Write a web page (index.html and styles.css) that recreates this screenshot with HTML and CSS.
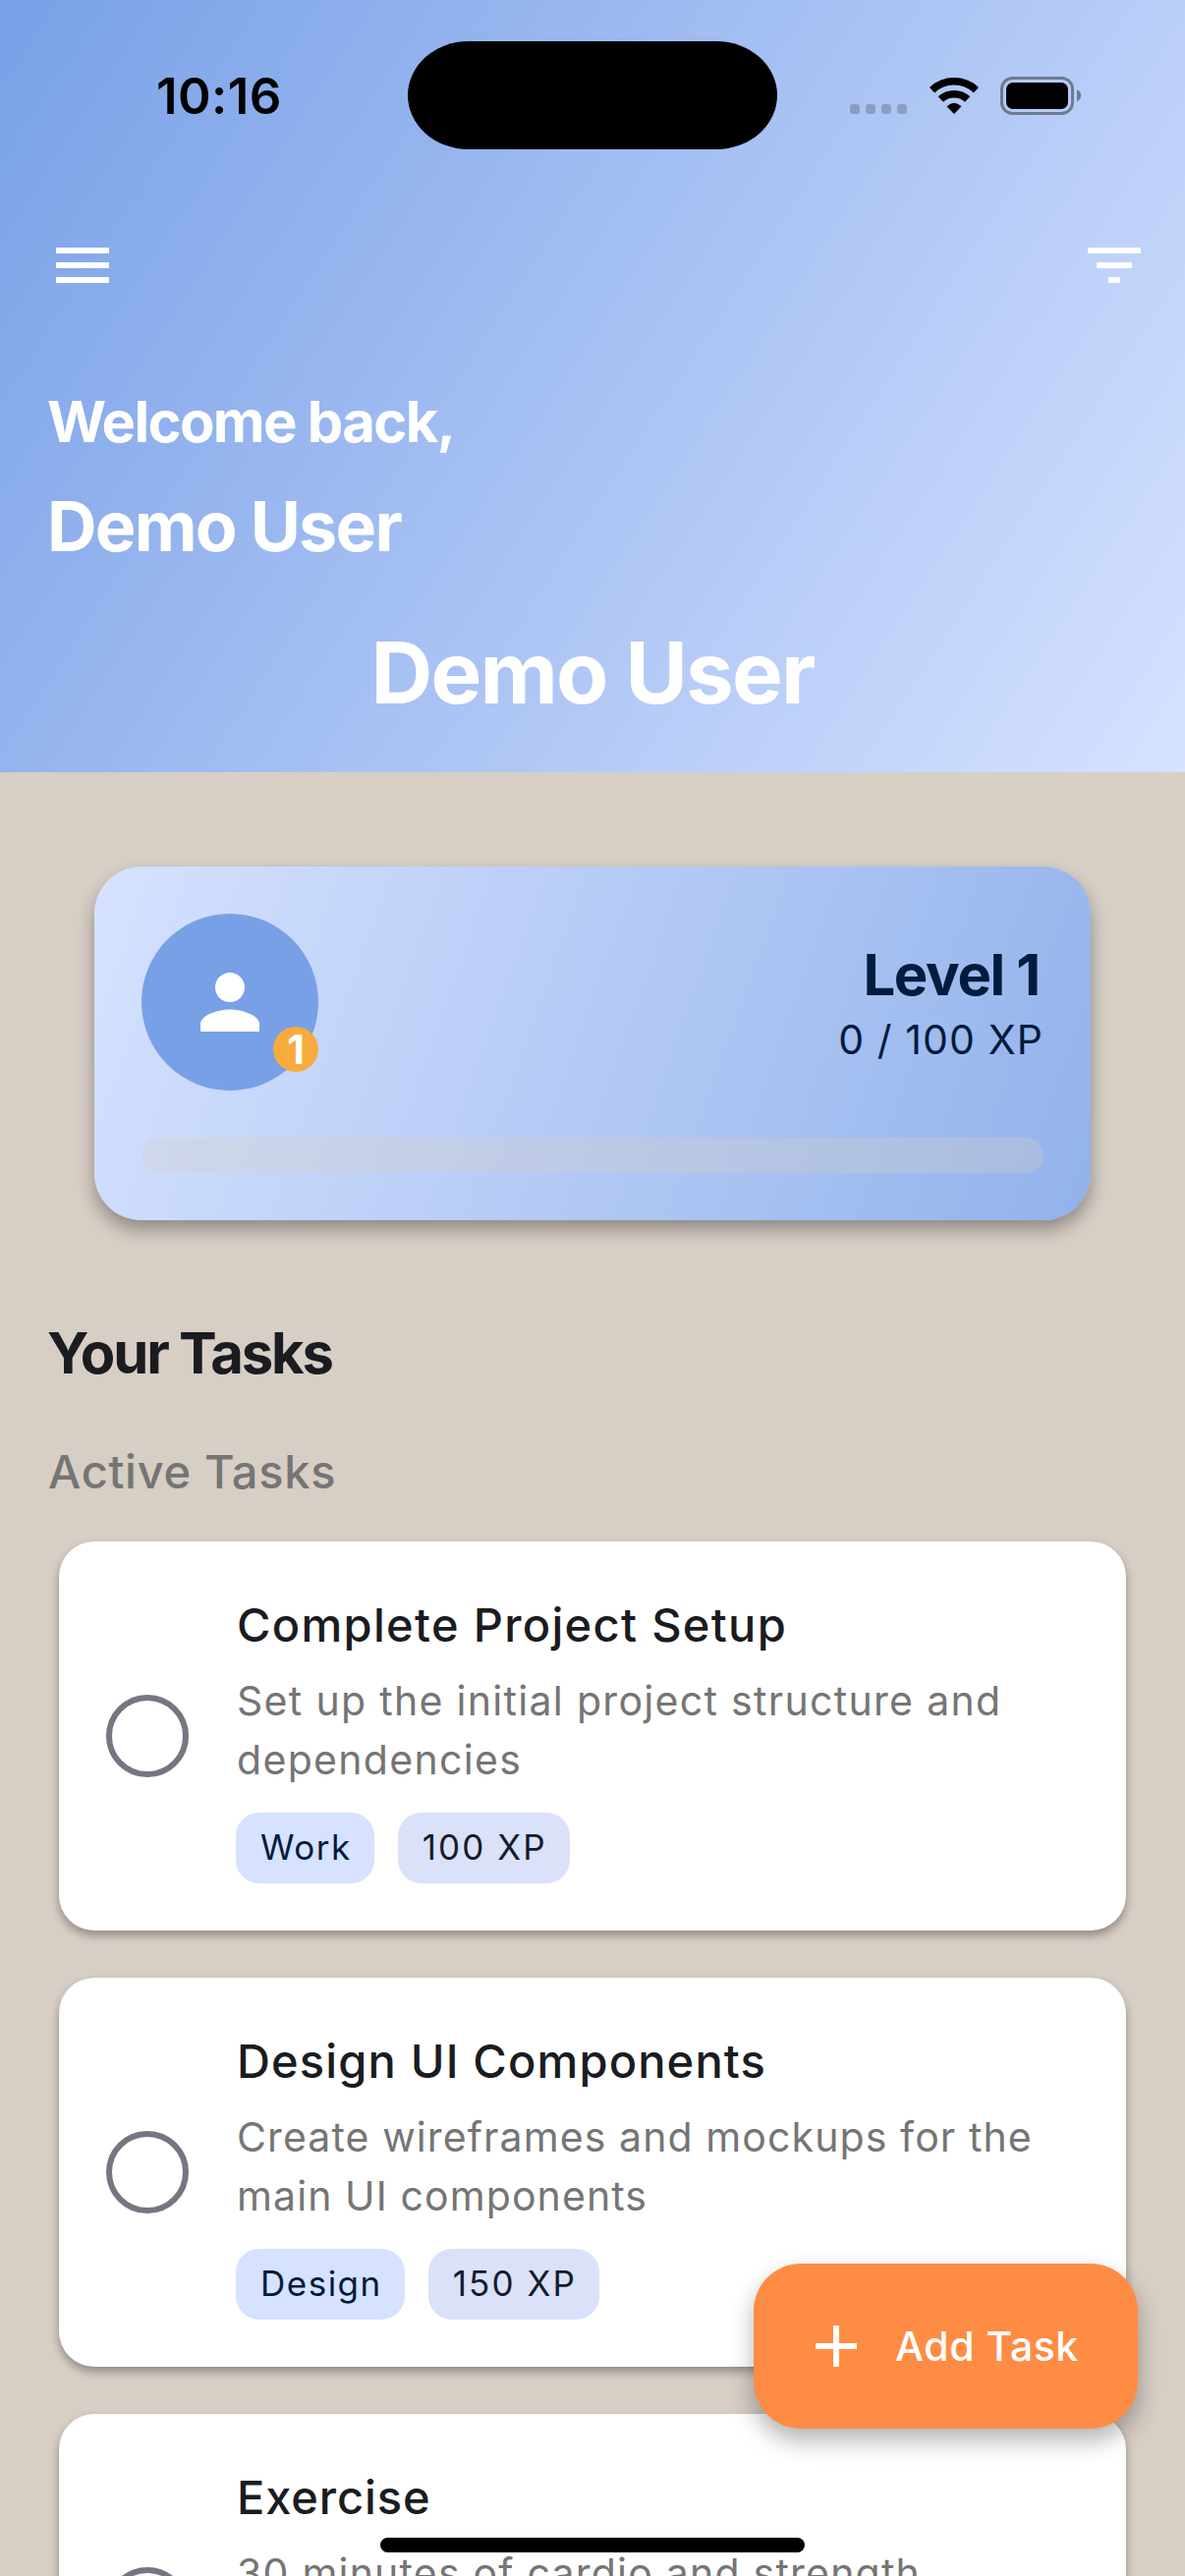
FILE: index.html
```html
<!DOCTYPE html>
<html lang="en">
<head>
<meta charset="utf-8">
<title>Tasks</title>
<link rel="stylesheet" href="styles.css">
</head>
<body>
<div class="screen">
  <header class="hero">
    <div class="status">
      <span class="status-time">10:16</span>
      <div class="island"></div>
      <div class="status-icons">
        <svg class="dots" viewBox="0 0 58 39"><g fill="#000" fill-opacity=".2"><rect y="28" width="10" height="10" rx="3"/><rect x="16" y="28" width="10" height="10" rx="3"/><rect x="32" y="28" width="10" height="10" rx="3"/><rect x="48" y="28" width="10" height="10" rx="3"/></g></svg>
        <svg class="wifi" viewBox="256 54 150 117"><g fill="none" stroke="#000" stroke-width="22.5"><path d="M263.8 95A98.5 98.5 0 0 1 398.2 95"/><path d="M290 123.1A60 60 0 0 1 372 123.1"/></g><path d="M308.5 145Q331 123 353.5 145L331 168Z"/></svg>
        <svg class="battery" viewBox="474 54 246 117"><rect x="478.5" y="58.5" width="216" height="108" rx="33" fill="none" stroke="#000" stroke-opacity=".4" stroke-width="9"/><rect x="492" y="72" width="189" height="81" rx="21"/><path d="M708 94Q720 99 720 112Q720 125 708 130Z" fill-opacity=".4"/></svg>
      </div>
    </div>
    <div class="toolbar">
      <svg class="tool" viewBox="0 0 24 24"><path d="M3 18h18v-2H3v2zm0-5h18v-2H3v2zm0-7v2h18V6H3z"/></svg>
      <svg class="tool" viewBox="0 0 24 24"><path d="M10 18h4v-2h-4v2zM3 6v2h18V6H3zm3 7h12v-2H6v2z"/></svg>
    </div>
    <p class="welcome">Welcome back,</p>
    <p class="name">Demo User</p>
    <h1 class="hero-title">Demo User</h1>
  </header>

  <main class="content">
    <section class="level-card">
      <div class="level-row">
        <div class="avatar">
          <svg viewBox="0 0 24 24"><path d="M12 12c2.21 0 4-1.79 4-4s-1.79-4-4-4-4 1.79-4 4 1.79 4 4 4zm0 2c-2.67 0-8 1.34-8 4v2h16v-2c0-2.66-5.33-4-8-4z"/></svg>
          <span class="badge">1</span>
        </div>
        <div class="level-info">
          <span class="level">Level 1</span>
          <span class="xp">0 / 100 XP</span>
        </div>
      </div>
      <div class="progress"></div>
    </section>

    <h2 class="section-title">Your Tasks</h2>
    <h3 class="group-title">Active Tasks</h3>

    <div class="tasks">
      <article class="task task-setup">
        <span class="check"></span>
        <div class="task-body">
          <h4>Complete Project Setup</h4>
          <p>Set up the initial project structure and<br>dependencies</p>
          <div class="chips"><span class="chip">Work</span><span class="chip chip-xp">100 XP</span></div>
        </div>
      </article>
      <article class="task task-design">
        <span class="check"></span>
        <div class="task-body">
          <h4>Design UI Components</h4>
          <p>Create wireframes and mockups for the<br>main UI components</p>
          <div class="chips"><span class="chip">Design</span><span class="chip chip-xp">150 XP</span></div>
        </div>
      </article>
      <article class="task task-exercise">
        <span class="check"></span>
        <div class="task-body">
          <h4>Exercise</h4>
          <p>30 minutes of cardio and strength</p>
        </div>
      </article>
    </div>
  </main>

  <button class="fab">
    <svg viewBox="0 0 24 24"><path d="M19 13h-6v6h-2v-6H5v-2h6V5h2v6h6v2z"/></svg>
    <span>Add Task</span>
  </button>
  <div class="home-indicator"></div>
</div>
</body>
</html>
```
FILE: styles.css
```css
* {
  box-sizing: border-box;
  margin: 0;
  padding: 0;
}

body {
  font-family: "Inter", "Liberation Sans", sans-serif;
  background: #d7cec5;
  overflow: hidden;
}

svg {
  display: block;
}

.screen {
  position: relative;
  width: 1206px;
  height: 2622px;
  overflow: hidden;
  background: #d7cec5;
}

/* Header */
.hero {
  height: 786px;
  padding-top: 42px;
  background: linear-gradient(123.09deg, #78a0e7, #d6e2ff);
  color: #fff;
}

.status {
  display: grid;
  grid-template-columns: 415px 376px 415px;
  align-items: center;
  height: 110px;
  color: #000;
}

.status-time {
  padding-left: 159px;
  font-size: 51px;
  font-weight: 600;
  letter-spacing: 0.4px;
}

.island {
  height: 110px;
  border-radius: 62px / 55px;
  background: #000;
}

.status-icons {
  display: flex;
  justify-content: flex-end;
  padding-right: 106px;
}

.status-icons svg {
  height: 39px;
}

.dots {
  width: 58px;
}

.wifi {
  width: 50px;
  margin: 0 22px 0 23px;
}

.battery {
  width: 82px;
}

.toolbar {
  display: flex;
  justify-content: space-between;
  margin-top: 82px;
  padding: 0 36px 0 48px;
}

.tool {
  width: 72px;
  height: 72px;
  fill: #fff;
}

.welcome {
  margin-top: 81px;
  padding-left: 48px;
  font-size: 58px;
  font-weight: 650;
  line-height: 84px;
  letter-spacing: -1.7px;
}

.name {
  margin-top: 17px;
  padding-left: 48px;
  font-size: 70px;
  font-weight: 650;
  line-height: 96px;
  letter-spacing: -1.8px;
}

.hero-title {
  margin-top: 47px;
  font-size: 87px;
  font-weight: 650;
  line-height: 108px;
  letter-spacing: -1.85px;
  text-align: center;
}

/* Level card */
.level-card {
  display: flex;
  flex-direction: column;
  gap: 48px;
  height: 360px;
  margin: 96px 96px 0;
  padding: 48px;
  border-radius: 48px;
  background: linear-gradient(109.55deg, #d6e2ff, #92b2eb);
  box-shadow: 0 10px 18px rgba(0, 0, 0, 0.33);
}

.level-row {
  display: flex;
  justify-content: space-between;
  align-items: center;
  height: 180px;
}

.avatar {
  position: relative;
  display: flex;
  align-items: center;
  justify-content: center;
  width: 180px;
  height: 180px;
  border-radius: 50%;
  background: #78a0e6;
}

.avatar svg {
  width: 90px;
  height: 90px;
  fill: #fff;
}

.badge {
  position: absolute;
  right: 0;
  bottom: 19px;
  width: 46px;
  height: 46px;
  border-radius: 50%;
  background: #f6ab3c;
  color: #fff;
  font-size: 41px;
  font-weight: 700;
  line-height: 46px;
  text-align: center;
}

.level-info {
  display: flex;
  flex-direction: column;
  align-items: flex-end;
  padding-top: 3px;
  color: #001b3d;
}

.level {
  padding-right: 4px;
  font-size: 58px;
  font-weight: 680;
  line-height: 72px;
  letter-spacing: -1.35px;
}

.xp {
  font-size: 41px;
  line-height: 60px;
  letter-spacing: 1.1px;
}

.progress {
  height: 36px;
  border-radius: 18px;
  background: rgba(216, 206, 197, 0.3);
}

/* Task list */
.section-title {
  margin-top: 93px;
  padding-left: 48px;
  color: #1a1c20;
  font-size: 58px;
  font-weight: 680;
  line-height: 84px;
  letter-spacing: -2.2px;
}

.group-title {
  margin-top: 43px;
  padding-left: 49px;
  color: #757575;
  font-size: 47px;
  font-weight: 450;
  line-height: 72px;
  letter-spacing: 0.68px;
}

.tasks {
  display: flex;
  flex-direction: column;
  gap: 48px;
  margin-top: 35px;
  padding: 0 60px;
}

.task {
  display: flex;
  gap: 48px;
  height: 396px;
  padding: 0 48px;
  border-radius: 36px;
  background: #fff;
  box-shadow: 0 5px 10px rgba(0, 0, 0, 0.33);
}

.check {
  align-self: center;
  width: 84px;
  height: 84px;
  border: 6px solid #747781;
  border-radius: 50%;
}

.task-body {
  padding-top: 49px;
}

.task h4 {
  padding-left: 1px;
  color: #1a1c20;
  font-size: 47px;
  font-weight: 470;
  line-height: 72px;
  white-space: nowrap;
}

.task p {
  margin-top: 11px;
  padding-left: 1px;
  color: #757575;
  font-size: 41px;
  font-weight: 380;
  line-height: 60px;
  white-space: nowrap;
}

.task-setup h4 { letter-spacing: 1.32px; }
.task-setup p { letter-spacing: 1.31px; }
.task-design h4 { letter-spacing: 1.16px; }
.task-design p { letter-spacing: 1.1px; }
.task-exercise h4 { letter-spacing: 0.9px; }
.task-exercise p { letter-spacing: 1.22px; }

.chips {
  display: flex;
  gap: 24px;
  margin-top: 24px;
}

.chip {
  height: 72px;
  padding: 0 23px 0 25px;
  border-radius: 24px;
  background: #d6e2ff;
  color: #001b3d;
  font-size: 35px;
  line-height: 71px;
  letter-spacing: 1.5px;
}

.chip-xp {
  background: #dae1f9;
  color: #131c2b;
  letter-spacing: 2.1px;
}

/* Floating layer */
.fab {
  position: absolute;
  top: 2304px;
  right: 48px;
  display: flex;
  align-items: center;
  gap: 24px;
  width: 391px;
  height: 168px;
  padding: 0 0 0 48px;
  border: 0;
  border-radius: 48px;
  background: #ff8c44;
  box-shadow: 0 12px 25px rgba(0, 0, 0, 0.3);
  color: #fff;
  font-family: inherit;
  font-size: 41px;
  font-weight: 470;
  letter-spacing: 0.55px;
}

.fab svg {
  width: 72px;
  height: 72px;
  fill: #fff;
}

.home-indicator {
  position: absolute;
  left: 387px;
  bottom: 24px;
  width: 432px;
  height: 15px;
  border-radius: 8px;
  background: #000;
}
```
